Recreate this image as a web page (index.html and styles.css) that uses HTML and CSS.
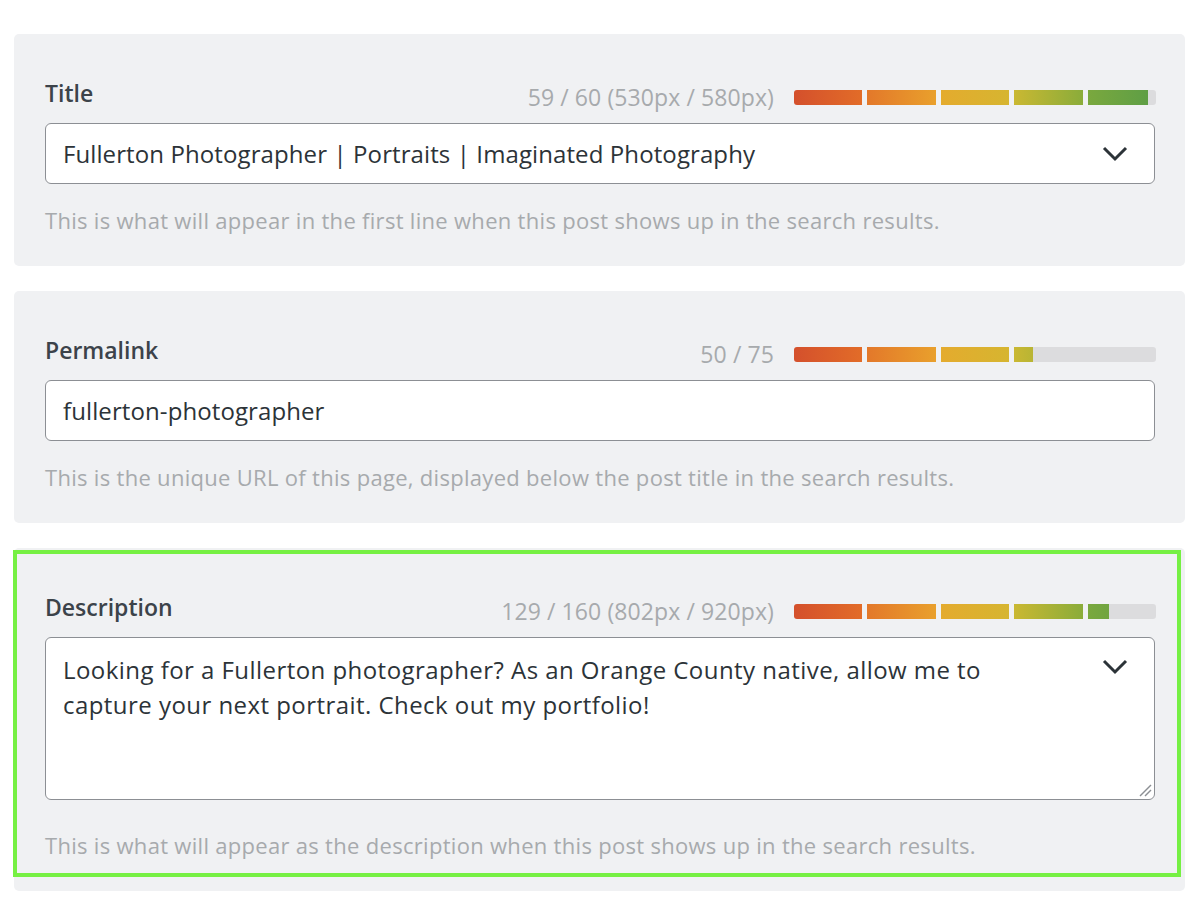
FILE: index.html
```html
<!DOCTYPE html>
<html lang="en">

<head>
	<meta charset="UTF-8">
	<title>Search Appearance</title>
	<link rel="stylesheet" href="styles.css">
</head>

<body>

	<div class="panel">

		<section class="field">
			<div class="fieldHead">
				<span class="fieldLabel">Title</span>
				<div class="meter">
					<span class="meterText">59 / 60 (530px / 580px)</span>
					<div class="bar">
						<div class="barFill" style="width: 354px">
							<div class="barSegs">
								<i class="seg seg1"></i><i class="seg seg2"></i><i class="seg seg3"></i><i class="seg seg4"></i><i class="seg seg5"></i>
							</div>
						</div>
						<div class="barRest"></div>
					</div>
				</div>
			</div>
			<div class="control">
				<span class="controlText">Fullerton Photographer | Portraits | Imaginated Photography</span>
				<svg class="chevron" width="26" height="16" viewBox="0 0 26 16"><polyline points="2,2 13,13 24,2" fill="none" stroke="#2c3338" stroke-width="3" /></svg>
			</div>
			<p class="hint">This is what will appear in the first line when this post shows up in the search results.</p>
		</section>

		<section class="field">
			<div class="fieldHead">
				<span class="fieldLabel">Permalink</span>
				<div class="meter">
					<span class="meterText">50 / 75</span>
					<div class="bar">
						<div class="barFill" style="width: 239px">
							<div class="barSegs">
								<i class="seg seg1"></i><i class="seg seg2"></i><i class="seg seg3"></i><i class="seg seg4"></i><i class="seg seg5"></i>
							</div>
						</div>
						<div class="barRest"></div>
					</div>
				</div>
			</div>
			<div class="control">
				<span class="controlText">fullerton-photographer</span>
			</div>
			<p class="hint">This is the unique URL of this page, displayed below the post title in the search results.</p>
		</section>

		<section class="field active">
			<div class="fieldHead">
				<span class="fieldLabel">Description</span>
				<div class="meter">
					<span class="meterText">129 / 160 (802px / 920px)</span>
					<div class="bar">
						<div class="barFill" style="width: 315px">
							<div class="barSegs">
								<i class="seg seg1"></i><i class="seg seg2"></i><i class="seg seg3"></i><i class="seg seg4"></i><i class="seg seg5"></i>
							</div>
						</div>
						<div class="barRest"></div>
					</div>
				</div>
			</div>
			<div class="control textArea">
				<span class="controlText">Looking for a Fullerton photographer? As an Orange County native, allow me to capture your next portrait. Check out my portfolio!</span>
				<svg class="chevron" width="26" height="16" viewBox="0 0 26 16"><polyline points="2,2 13,13 24,2" fill="none" stroke="#2c3338" stroke-width="3" /></svg>
				<svg class="grip" width="14" height="14" viewBox="0 0 14 14"><line x1="2" y1="13" x2="13" y2="2" stroke="#8c8f94" stroke-width="1.5" /><line x1="7" y1="13" x2="13" y2="7" stroke="#8c8f94" stroke-width="1.5" /></svg>
			</div>
			<p class="hint">This is what will appear as the description when this post shows up in the search results.</p>
			<div class="highlight"></div>
		</section>

	</div>

</body>

</html>
```

FILE: styles.css
```css
* {
	margin: 0;
	padding: 0;
	box-sizing: border-box;
}

body {
	font-family: 'Open Sans', 'Noto Sans', sans-serif;
	background-color: #fff;
	color: #2c3338;
}

.panel {
	display: flex;
	flex-direction: column;
	gap: 25px;
	width: 1171px;
	margin: 34px 0 0 14px;
}

.field {
	position: relative;
	background-color: #f0f1f3;
	border-radius: 5px;
	padding: 44px 30px 31px 31px;
}

.fieldHead {
	display: flex;
	justify-content: space-between;
	align-items: center;
	height: 30px;
	margin-bottom: 15px;
}

.fieldLabel {
	font-size: 23px;
	line-height: 30px;
	font-weight: 600;
	color: #3c434a;
}

.meter {
	display: flex;
	align-items: center;
	gap: 20px;
	margin-top: 8px;
	margin-right: -1px;
}

.meterText {
	font-size: 23px;
	line-height: 30px;
	color: #a7aaad;
	letter-spacing: 0.1px;
}

.bar {
	display: flex;
	width: 362px;
	height: 15px;
	border-radius: 3px;
	overflow: hidden;
}

.barFill {
	overflow: hidden;
	flex-shrink: 0;
}

.barSegs {
	display: flex;
	gap: 5px;
	width: 362px;
	height: 15px;
}

.seg {
	flex: 1;
}

.seg1 {
	background: linear-gradient(90deg, #d4502c, #e26c28);
}

.seg2 {
	background: linear-gradient(90deg, #e3782a, #e9a02c);
}

.seg3 {
	background: linear-gradient(90deg, #e4ab2e, #d6b530);
}

.seg4 {
	background: linear-gradient(90deg, #cab832, #8aac3a);
}

.seg5 {
	background: linear-gradient(90deg, #7aa83e, #5b9d46);
}

.barRest {
	flex: 1;
	background-color: #dcdcde;
}

.control {
	position: relative;
	display: flex;
	align-items: center;
	justify-content: space-between;
	height: 61px;
	padding: 0 26px 0 17px;
	background-color: #fff;
	border: 1.5px solid #8c8f94;
	border-radius: 6px;
}

.controlText {
	font-size: 24px;
	color: #2c3338;
	letter-spacing: 0.1px;
}

.textArea {
	align-items: flex-start;
	height: 163px;
	padding-top: 14px;
	padding-right: 120px;
}

.textArea .controlText {
	line-height: 35px;
	letter-spacing: 0.45px;
}

.textArea .chevron {
	position: absolute;
	top: 21px;
	right: 26px;
}

.grip {
	position: absolute;
	right: 2px;
	bottom: 2px;
}

.hint {
	margin-top: 21px;
	font-size: 22px;
	line-height: 30px;
	color: #a7aaad;
	letter-spacing: 0.3px;
}

.active .hint {
	margin-top: 30px;
}

.highlight {
	position: absolute;
	top: 2px;
	left: -1px;
	right: 4px;
	bottom: 14px;
	border: 4px solid #76f043;
	pointer-events: none;
}
```
